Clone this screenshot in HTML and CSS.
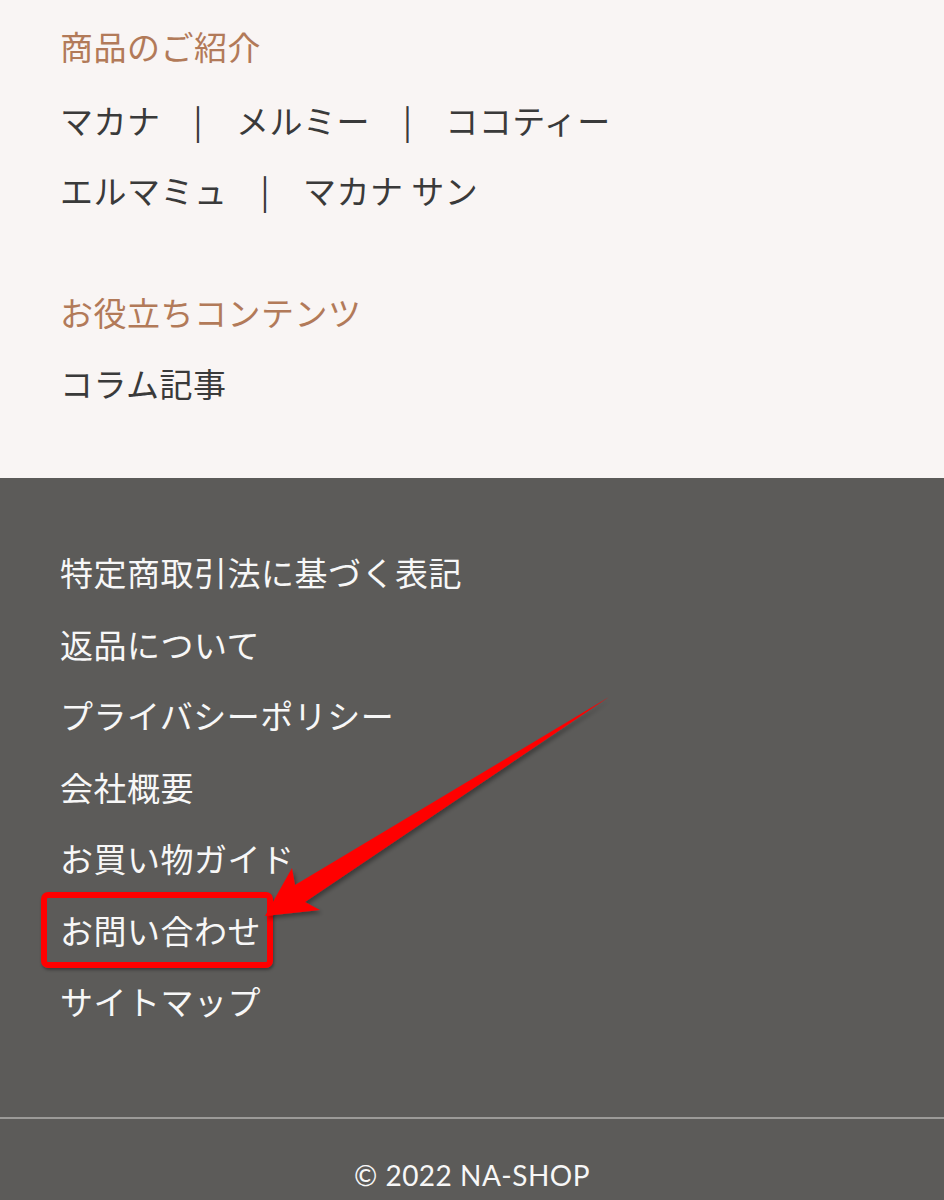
FILE: index.html
```html
<!DOCTYPE html>
<html lang="ja">
  <head>
    <meta charset="UTF-8" />
    <meta name="viewport" content="width=device-width, initial-scale=1.0" />
    <title>NA-SHOP</title>
    <link rel="stylesheet" href="styles.css">
  </head>
  <body>
    <section class="intro">
      <h2 class="intro-title">商品のご紹介</h2>
      <div class="product-row">
        <a href="#">マカナ</a><span class="sep">|</span><a href="#">メルミー</a><span class="sep">|</span><a href="#">ココティー</a>
      </div>
      <div class="product-row">
        <a href="#">エルマミュ</a><span class="sep">|</span><a href="#">マカナ サン</a>
      </div>

      <h2 class="intro-title second">お役立ちコンテンツ</h2>
      <div class="product-row">
        <a href="#">コラム記事</a>
      </div>
    </section>

    <footer class="footer">
      <ul class="footer-links">
        <li><a href="#">特定商取引法に基づく表記</a></li>
        <li><a href="#">返品について</a></li>
        <li><a href="#">プライバシーポリシー</a></li>
        <li><a href="#">会社概要</a></li>
        <li><a href="#">お買い物ガイド</a></li>
        <li class="marked"><a href="#">お問い合わせ</a></li>
        <li><a href="#">サイトマップ</a></li>
      </ul>
      <div class="copyright">© 2022 NA-SHOP</div>
    </footer>

    <svg class="arrow" width="944" height="1200" viewBox="0 0 944 1200">
      <defs>
        <filter id="shadow" x="-10%" y="-10%" width="120%" height="120%">
          <feDropShadow dx="2" dy="3" stdDeviation="2" flood-color="#000" flood-opacity="0.35" />
        </filter>
      </defs>
      <polygon filter="url(#shadow)" fill="#ff0000"
        points="265,916 292,868 295,885 609,697 305,902 320,910" />
    </svg>
  </body>
</html>
```

FILE: styles.css
```css
body {
  margin: 0;
  font-family: "Noto Sans CJK JP", "Noto Sans", sans-serif;
  position: relative;
}

a {
  color: inherit;
  text-decoration: none;
}

.intro {
  background-color: #f9f5f4;
  padding: 22px 60px 71px;
  color: #3a3a3a;
}

.intro-title {
  margin: 0 0 26px;
  font-size: 33px;
  font-weight: normal;
  line-height: 48px;
  letter-spacing: 0.5px;
  color: #b27a59;
}

.intro-title.second {
  margin-top: 74px;
  margin-bottom: 23px;
}

.product-row {
  font-size: 33px;
  line-height: 48px;
  letter-spacing: 0.5px;
  margin-bottom: 22px;
}

.product-row:last-child {
  margin-bottom: 0;
}

.sep {
  margin: 0 33px;
}

.footer {
  background-color: #5c5b59;
  color: #f7f7f7;
}

.footer-links {
  list-style: none;
  margin: 0;
  padding: 70px 60px 92px;
  display: flex;
  flex-direction: column;
  gap: 23.5px;
  border-bottom: 2px solid #9b9a98;
}

.footer-links li {
  font-size: 33px;
  line-height: 48px;
  letter-spacing: 0.5px;
}

.marked {
  position: relative;
  align-self: flex-start;
}

.marked::after {
  content: "";
  position: absolute;
  left: -19px;
  top: -14px;
  width: 220px;
  height: 64px;
  border: 6px solid #ff0000;
  border-radius: 7px;
  box-shadow: 1px 2px 3px rgba(0, 0, 0, 0.35);
}

.copyright {
  font-family: "Lato", sans-serif;
  font-size: 28px;
  line-height: 40px;
  text-align: center;
  padding: 36px 0 30px;
  letter-spacing: 0.5px;
}

.arrow {
  position: absolute;
  left: 0;
  top: 0;
  pointer-events: none;
}
```
